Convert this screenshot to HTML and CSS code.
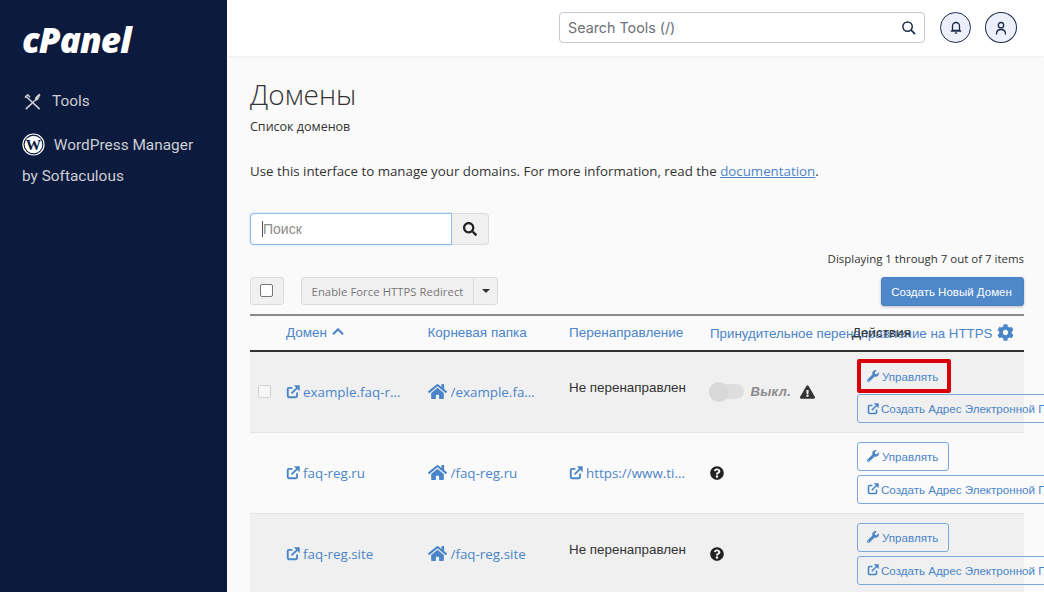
FILE: index.html
```html
<!DOCTYPE html>
<html lang="ru">
<head>
<meta charset="utf-8">
<title>Домены</title>
<link rel="stylesheet" href="styles.css">
</head>
<body>
<svg class="defs" width="0" height="0" aria-hidden="true">
  <symbol id="i-ext" viewBox="0 0 24 24"><path fill="none" stroke="currentColor" stroke-width="3.200" d="M11 5H5a2 2 0 0 0-2 2v12a2 2 0 0 0 2 2h12a2 2 0 0 0 2-2v-6M9.500 14.500 20 4"/><path fill="currentColor" d="M13.500 .5h10v10z"/></symbol>
  <symbol id="i-home" viewBox="0 0 576 512"><path fill="currentColor" d="M280.37 148.26L96 300.11V464a16 16 0 0 0 16 16l112.06-.29a16 16 0 0 0 15.92-16V368a16 16 0 0 1 16-16h64a16 16 0 0 1 16 16v95.64a16 16 0 0 0 16 16.05L464 480a16 16 0 0 0 16-16V300L295.67 148.26a12.19 12.19 0 0 0-15.3 0zM571.6 251.47L488 182.56V44.05a12 12 0 0 0-12-12h-56a12 12 0 0 0-12 12v72.61L318.47 43a48 48 0 0 0-61 0L4.34 251.47a12 12 0 0 0-1.6 16.9l25.5 31A12 12 0 0 0 45.15 301l235.22-193.74a12.19 12.19 0 0 1 15.3 0L530.9 301a12 12 0 0 0 16.9-1.6l25.5-31a12 12 0 0 0-1.7-16.93z"/></symbol>
  <symbol id="i-wrench" viewBox="0 0 512 512"><path fill="currentColor" d="M507.73 109.1c-2.24-9.03-13.54-12.09-20.12-5.51l-74.36 74.36-67.88-11.31-11.31-67.88 74.36-74.36c6.62-6.62 3.43-17.9-5.66-20.16-47.38-11.74-99.55.91-136.58 37.93-39.64 39.64-50.55 97.1-34.05 147.2L18.74 402.76c-24.99 24.99-24.99 65.51 0 90.5 24.99 24.99 65.51 24.99 90.5 0l213.21-213.21c50.12 16.71 107.47 5.68 147.37-34.22 37.07-37.07 49.7-89.32 37.91-136.73zM64 472c-13.25 0-24-10.75-24-24 0-13.26 10.75-24 24-24s24 10.74 24 24c0 13.25-10.75 24-24 24z"/></symbol>
  <symbol id="i-q" viewBox="0 0 512 512"><path fill="currentColor" d="M504 256c0 136.997-111.043 248-248 248S8 392.997 8 256C8 119.083 119.043 8 256 8s248 111.083 248 248zM262.655 90c-54.497 0-89.255 22.957-116.549 63.758-3.536 5.286-2.353 12.415 2.715 16.258l34.699 26.31c5.205 3.947 12.621 3.008 16.665-2.122 17.864-22.658 30.113-35.797 57.303-35.797 20.429 0 45.698 13.148 45.698 32.958 0 14.976-12.363 22.667-32.534 33.976C247.128 238.528 216 254.941 216 296v4c0 6.627 5.373 12 12 12h56c6.627 0 12-5.373 12-12v-1.333c0-28.462 83.186-29.647 83.186-106.667 0-58.002-60.165-102-116.531-102zM256 338c-25.365 0-46 20.635-46 46 0 25.364 20.635 46 46 46s46-20.636 46-46c0-25.365-20.635-46-46-46z"/></symbol>
  <symbol id="i-search" viewBox="0 0 512 512"><path fill="currentColor" d="M505 442.7L405.3 343c-4.500-4.500-10.600-7-17-7H372c27.600-35.300 44-79.700 44-128C416 93.100 322.900 0 208 0S0 93.100 0 208s93.100 208 208 208c48.300 0 92.700-16.400 128-44v16.300c0 6.400 2.500 12.500 7 17l99.700 99.700c9.400 9.400 24.600 9.400 33.900 0l28.300-28.300c9.400-9.400 9.400-24.600.1-34zM208 336c-70.700 0-128-57.200-128-128 0-70.700 57.200-128 128-128 70.700 0 128 57.200 128 128 0 70.700-57.200 128-128 128z"/></symbol>
</svg>
<div class="app">
  <aside class="sidebar">
    <div class="logo">cPanel</div>
    <a class="nav-item nav-tools">
      <svg class="nav-icon" viewBox="0 0 20 20"><path fill="none" stroke="currentColor" stroke-width="1.700" stroke-linecap="round" d="M3.500 17.500 12 9.500M3 4.500 17 17.500"/><path fill="currentColor" d="M12 9.500 13 5.500 17 1.500 18.500 3.500 15.500 7 18.500 4.500 15 9z"/><path fill="none" stroke="currentColor" stroke-width="1.500" stroke-linecap="round" d="M2.500 5.500 5 3 7 5"/></svg>
      <span>Tools</span>
    </a>
    <a class="nav-item nav-wp">
      <svg class="wp-icon" viewBox="0 0 24 24"><circle cx="12" cy="12" r="11" fill="none" stroke="#fff" stroke-width="1.200"/><circle cx="12" cy="12" r="9.200" fill="#fff"/><text x="12" y="18" class="wp-w">W</text></svg>
      WordPress Manager by Softaculous
    </a>
  </aside>
  <div class="main">
    <header class="topbar">
      <div class="tool-search">
        <span class="tool-search-text">Search Tools (/)</span>
        <svg class="tool-search-icon" viewBox="0 0 16 16"><circle cx="7" cy="7" r="5" fill="none" stroke="currentColor" stroke-width="1.600"/><path d="M10.800 10.800 14.500 14.500" stroke="currentColor" stroke-width="1.800" stroke-linecap="round"/></svg>
      </div>
      <button class="round-btn"><svg viewBox="0 0 16 16"><path fill="none" stroke="currentColor" stroke-width="1.300" stroke-linejoin="round" d="M8 2.500a3.500 3.500 0 0 0-3.500 3.500v4.500h7V6A3.500 3.500 0 0 0 8 2.500zM2.800 11h10.400"/><path fill="none" stroke="currentColor" stroke-width="1.300" d="M6.800 13h2.400"/></svg></button>
      <button class="round-btn round-user"><svg viewBox="0 0 16 16"><circle cx="8" cy="5.200" r="2.700" fill="none" stroke="currentColor" stroke-width="1.300"/><path fill="none" stroke="currentColor" stroke-width="1.300" stroke-linecap="round" d="M3.500 14c0-3 1.500-4.500 4.500-4.500s4.500 1.500 4.500 4.500"/></svg></button>
    </header>
    <main class="content">
      <h1 class="title">Домены</h1>
      <p class="subtitle">Список доменов</p>
      <p class="intro">Use this interface to manage your domains. For more information, read the <a class="doc-link">documentation</a>.</p>
      <div class="search-group">
        <div class="search-input"><span class="caret-bar"></span>Поиск</div>
        <button class="search-btn"><svg class="ic-15" viewBox="0 0 512 512"><use href="#i-search"/></svg></button>
      </div>
      <p class="paging">Displaying 1 through 7 out of 7 items</p>
      <div class="toolbar">
        <div class="check-btn"><span class="box"></span></div>
        <div class="split">
          <span class="split-main">Enable Force HTTPS Redirect</span>
          <span class="split-caret"><i></i></span>
        </div>
        <button class="primary">Создать Новый Домен</button>
      </div>
      <table class="domains">
        <colgroup><col class="c-check"><col class="c-std"><col class="c-std"><col class="c-std"><col class="c-std"><col class="c-act"></colgroup>
        <thead>
          <tr>
            <th></th>
            <th>Домен <svg class="chev" viewBox="0 0 448 512"><path fill="currentColor" d="M240.971 130.524l194.343 194.343c9.373 9.373 9.373 24.569 0 33.941l-22.667 22.667c-9.357 9.357-24.522 9.375-33.901.04L224 227.495 69.255 381.516c-9.379 9.335-24.544 9.317-33.901-.04l-22.667-22.667c-9.373-9.373-9.373-24.569 0-33.941L207.03 130.525c9.372-9.373 24.568-9.373 33.941-.001z"/></svg></th>
            <th>Корневая папка</th>
            <th>Перенаправление</th>
            <th class="th-force">Принудительное перенаправление на HTTPS <svg class="gear" viewBox="0 0 512 512"><path fill="currentColor" d="M487.4 315.7l-42.6-24.6c4.300-23.200 4.300-47 0-70.200l42.600-24.600c4.900-2.800 7.100-8.600 5.500-14-11.100-35.600-30-67.800-54.700-94.600-3.800-4.100-10-5.100-14.800-2.300L380.800 110c-17.900-15.400-38.500-27.300-60.800-35.100V25.800c0-5.600-3.900-10.500-9.400-11.700-36.700-8.200-74.300-7.800-109.200 0-5.500 1.200-9.400 6.100-9.400 11.700V75c-22.200 7.900-42.800 19.800-60.800 35.100L88.700 85.500c-4.900-2.800-11-1.900-14.800 2.300-24.700 26.700-43.600 58.900-54.700 94.600-1.700 5.400.6 11.200 5.500 14L67.300 221c-4.300 23.200-4.300 47 0 70.200l-42.600 24.600c-4.900 2.800-7.100 8.600-5.500 14 11.100 35.600 30 67.800 54.700 94.600 3.800 4.100 10 5.100 14.800 2.300l42.600-24.600c17.900 15.400 38.500 27.300 60.800 35.100v49.200c0 5.600 3.900 10.500 9.400 11.700 36.700 8.200 74.300 7.800 109.200 0 5.500-1.200 9.400-6.100 9.400-11.700v-49.200c22.200-7.900 42.800-19.800 60.800-35.100l42.600 24.600c4.900 2.800 11 1.900 14.800-2.300 24.700-26.700 43.600-58.900 54.700-94.600 1.500-5.500-.7-11.300-5.600-14.100zM256 336c-44.100 0-80-35.900-80-80s35.900-80 80-80 80 35.900 80 80-35.900 80-80 80z"/></svg></th>
            <th class="th-act">Действия</th>
          </tr>
        </thead>
        <tbody>
          <tr>
            <td><span class="row-check"></span></td>
            <td><a class="cell-link"><svg class="ic-ext"><use href="#i-ext"/></svg><span class="trunc">example.faq-reg.ru</span></a></td>
            <td><a class="cell-link"><svg class="ic-home"><use href="#i-home"/></svg><span class="trunc trunc-root">/example.faq-reg.ru</span></a></td>
            <td class="plain">Не перенаправлен</td>
            <td>
              <div class="force">
                <span class="toggle"><i></i></span><em>Выкл.</em>
                <svg class="warn" viewBox="0 0 576 512"><path fill="currentColor" d="M569.517 440.013C587.975 472.007 564.806 512 527.940 512H48.054c-36.937 0-59.999-40.055-41.577-71.987L246.423 24.028c18.467-32.009 64.720-31.951 83.154 0l239.940 416zM288 354c-25.405 0-46 20.595-46 46s20.595 46 46 46 46-20.595 46-46-20.595-46-46-46zm-43.673-165.346l7.418 136c.347 6.364 5.609 11.346 11.982 11.346h48.546c6.373 0 11.635-4.982 11.982-11.346l7.418-136c.375-6.874-5.098-12.654-11.982-12.654h-63.383c-6.884 0-12.356 5.780-11.981 12.654z"/></svg>
              </div>
            </td>
            <td class="actions first-actions">
              <a class="act act-marked"><svg class="ic-wrench"><use href="#i-wrench"/></svg>Управлять</a>
              <a class="act act-wide"><svg class="ic-ext-sm"><use href="#i-ext"/></svg>Создать Адрес Электронной Почты</a>
            </td>
          </tr>
          <tr>
            <td></td>
            <td><a class="cell-link"><svg class="ic-ext"><use href="#i-ext"/></svg><span class="trunc">faq-reg.ru</span></a></td>
            <td><a class="cell-link"><svg class="ic-home"><use href="#i-home"/></svg><span class="trunc">/faq-reg.ru</span></a></td>
            <td><a class="cell-link"><svg class="ic-ext"><use href="#i-ext"/></svg><span class="trunc">https://www.timeweb.ru</span></a></td>
            <td><svg class="ic-q"><use href="#i-q"/></svg></td>
            <td class="actions">
              <a class="act"><svg class="ic-wrench"><use href="#i-wrench"/></svg>Управлять</a>
              <a class="act act-wide"><svg class="ic-ext-sm"><use href="#i-ext"/></svg>Создать Адрес Электронной Почты</a>
            </td>
          </tr>
          <tr>
            <td></td>
            <td><a class="cell-link"><svg class="ic-ext"><use href="#i-ext"/></svg><span class="trunc">faq-reg.site</span></a></td>
            <td><a class="cell-link"><svg class="ic-home"><use href="#i-home"/></svg><span class="trunc">/faq-reg.site</span></a></td>
            <td class="plain">Не перенаправлен</td>
            <td><svg class="ic-q"><use href="#i-q"/></svg></td>
            <td class="actions">
              <a class="act"><svg class="ic-wrench"><use href="#i-wrench"/></svg>Управлять</a>
              <a class="act act-wide"><svg class="ic-ext-sm"><use href="#i-ext"/></svg>Создать Адрес Электронной Почты</a>
            </td>
          </tr>
        </tbody>
      </table>
    </main>
  </div>
</div>
</body>
</html>
```

FILE: styles.css
```css
* { box-sizing: border-box; }
html, body { margin: 0; height: 592px; overflow: hidden; }
body { font-family: "Open Sans", "Liberation Sans", sans-serif; color: #333; background: #fafafa; }
.defs { position: absolute; }
.app { display: flex; height: 592px; }

.sidebar { flex: 0 0 227px; background: #0c1a3e; color: #cdced4; font-family: Roboto, sans-serif; font-size: 15.400px; padding: 24px 22px 0; }
.logo { font-family: "Open Sans", sans-serif; font-weight: 800; font-style: italic; font-size: 35px; line-height: 32px; color: #fff; letter-spacing: -.9px; height: 32px; margin-bottom: 29px; }
.nav-item { display: block; }
.nav-tools { display: flex; align-items: center; gap: 10px; height: 32px; margin-bottom: 12px; }
.nav-icon { width: 19px; height: 19px; flex: none; margin-left: 1px; }
.nav-wp { line-height: 31px; width: 180px; padding-top: 1px; }
.wp-icon { width: 23px; height: 23px; vertical-align: -6px; margin-right: 5px; }
.wp-w { font-family: "Liberation Serif", serif; font-weight: 700; font-size: 16px; text-anchor: middle; fill: #0c1a3e; }

.main { flex: 1; min-width: 0; display: flex; flex-direction: column; }
.topbar { flex: 0 0 56px; background: #fff; display: flex; align-items: center; justify-content: flex-end; gap: 15px; padding: 0 27px 1px 0; box-shadow: 0 1px 2px rgba(0,0,0,.05); }
.tool-search { width: 366px; height: 31px; border: 1px solid #c3c8d2; border-radius: 4px; display: flex; align-items: center; justify-content: space-between; padding: 0 8px; font-family: Inter, sans-serif; font-size: 14.300px; color: #6e7077; background: #fff; }
.tool-search-icon { width: 15px; height: 15px; color: #1c2b4a; }
.round-btn { width: 31px; height: 31px; padding: 0; border-radius: 50%; border: 1px solid #1c2b4a; background: #edf0fb; color: #1c2b4a; display: flex; align-items: center; justify-content: center; }
.round-user { width: 32px; margin-left: -1px; }
.round-btn svg { width: 16px; height: 16px; }

.content { flex: 1; min-height: 0; padding: 20px 20px 0 23px; }
.title { margin: 0; font-weight: 300; font-size: 28px; line-height: 36px; color: #333; }
.subtitle { margin: 6px 0 0; font-size: 12.500px; line-height: 18px; color: #333; }
.intro { margin: 26px 0 0; font-size: 13.320px; line-height: 18px; color: #333; }
.doc-link { color: #4a85c8; text-decoration: underline; }

.search-group { display: flex; margin-top: 33px; height: 32px; width: 239px; }
.search-input { width: 202px; border: 1px solid #8dbbea; border-radius: 4px 0 0 4px; background: #fff; font-size: 14px; color: #8b8b8b; display: flex; align-items: center; padding-left: 11px; font-family: "Liberation Sans", sans-serif; box-shadow: 0 0 2px rgba(100,160,230,.5); }
.caret-bar { width: 1px; height: 16px; background: #555; }
.search-btn { width: 37px; padding: 0; border: 1px solid #dcdcdc; border-left: 0; border-radius: 0 4px 4px 0; background: #f0f0f0; color: #222; display: flex; align-items: center; justify-content: center; }
.ic-15 { width: 14px; height: 14px; }

.paging { margin: 5px 0 0; text-align: right; font-size: 11.460px; line-height: 18px; color: #333; }

.toolbar { display: flex; align-items: flex-start; margin-top: 9px; height: 37px; }
.check-btn { width: 34px; height: 28px; border: 1px solid #dcdcdc; border-radius: 3px; background: #f0f0f0; display: flex; align-items: center; justify-content: center; }
.box { width: 13px; height: 13px; background: #fff; border: 1px solid #777; border-radius: 2px; margin: -2px 0 0 -1px; }
.split { display: flex; height: 28px; margin-left: 17px; border: 1px solid #dcdcdc; border-radius: 3px; background: #f0f0f0; font-size: 11.200px; color: #777; letter-spacing: .1px; }
.split-main { width: 172px; display: flex; align-items: center; justify-content: center; border-right: 1px solid #dcdcdc; white-space: nowrap; }
.split-caret { width: 23px; display: flex; align-items: center; justify-content: center; }
.split-caret i { border: 4px solid transparent; border-top-color: #333; border-bottom: 0; }
.primary { margin-left: auto; width: 143px; height: 29px; padding: 0 2px 0 0; border: 1px solid #4a85c8; border-radius: 3px; background: #4f87cb; color: #fff; font-family: "Liberation Sans", sans-serif; font-size: 11.500px; box-shadow: 0 1px 3px rgba(0,0,0,.25); }

.domains { width: 774px; table-layout: fixed; border-collapse: collapse; }
.c-check { width: 28px; }
.c-std { width: 141.500px; }
.c-act { width: 180px; }
.domains thead tr { height: 36px; border-top: 2px solid #8a8a8a; border-bottom: 2px solid #333; }
.domains th { padding: 0 8px 2px; text-align: left; font-family: "Liberation Sans", sans-serif; font-weight: 400; font-size: 13.500px; color: #4a85c8; white-space: nowrap; overflow: visible; }
.domains th.th-force { font-size: 13.300px; padding-left: 7.500px; }
.domains th.th-act { color: #333; position: relative; font-size: 13.400px; }
.chev { width: 14px; height: 13px; vertical-align: -1px; }
.gear { width: 17px; height: 17px; vertical-align: -3px; margin-left: 1px; }
.domains tbody tr { height: 81px; border-bottom: 1px solid #e4e4e4; }
.domains tbody tr:nth-child(odd) { background: #f0f0f0; }
.domains td { padding: 0 8px; vertical-align: middle; font-size: 13.400px; }
.row-check { display: block; width: 13px; height: 13px; border: 1px solid #d4d4d4; border-radius: 2px; background: #f6f6f6; }
.cell-link { display: flex; align-items: center; color: #4a85c8; }
.trunc { overflow: hidden; white-space: nowrap; text-overflow: ellipsis; max-width: 99px; }
.trunc-root { max-width: 85px; }
.ic-ext { width: 14px; height: 14px; margin-right: 3px; flex: none; }
.ic-home { width: 19px; height: 17px; margin-right: 4px; flex: none; }
.plain { font-family: "Liberation Sans", sans-serif; color: #333; padding-bottom: 8px !important; }
.force { display: flex; align-items: center; margin-left: -2px; }
.toggle { width: 35px; height: 15px; border-radius: 8px; background: #dedede; display: block; position: relative; }
.toggle i { position: absolute; left: 0; top: -2px; width: 20px; height: 20px; border-radius: 50%; background: #d8d8d8; }
.force em { margin-left: 7px; font-family: "Liberation Sans", sans-serif; font-weight: 700; color: #8a8a8a; letter-spacing: .3px; font-size: 13px; }
.warn { width: 15px; height: 14px; margin-left: 9px; color: #333; }
.ic-q { display: block; width: 14px; height: 14px; color: #222; margin-left: -1px; }

.actions { padding-left: 13px !important; white-space: nowrap; vertical-align: top !important; padding-top: 9px !important; }
.first-actions { padding-top: 7px !important; }
.act { display: flex; align-items: center; width: 92px; height: 29px; margin-bottom: 4px; padding-left: 9px; border: 1px solid #7ba7da; border-radius: 3px; color: #4a85c8; font-family: "Liberation Sans", sans-serif; font-size: 11.600px; }
.act-marked { width: 94px; height: 34px; margin-bottom: 1px; padding-left: 6px; border: 4px solid #d8000c; border-radius: 2px; }
.act-wide { width: 230px; }
.ic-wrench { width: 12px; height: 12px; margin-right: 3px; flex: none; }
.ic-ext-sm { width: 12px; height: 12px; margin-right: 2px; flex: none; }
```
